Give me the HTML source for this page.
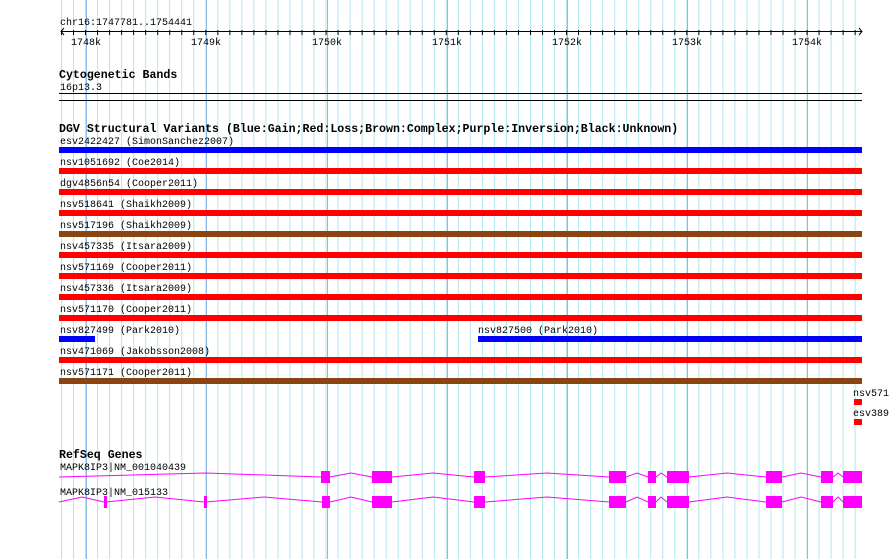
<!DOCTYPE html>
<html><head><meta charset="utf-8"><style>
html,body{margin:0;padding:0;background:#fff;width:890px;height:559px;overflow:hidden}
svg{display:block}
text{font-family:"Liberation Mono","DejaVu Sans Mono",monospace;font-size:10px;fill:#000}
.b{font-weight:bold;font-size:11.6px}
</style></head><body>
<svg width="890" height="559" viewBox="0 0 890 559" xmlns="http://www.w3.org/2000/svg">
<defs>
<pattern id="g" patternUnits="userSpaceOnUse" x="61" y="0" width="12.025" height="559">
<rect x="0" y="0" width="1" height="559" fill="#b4e6ee"/>
</pattern>
<pattern id="t" patternUnits="userSpaceOnUse" x="61" y="0" width="12.025" height="10">
<rect x="0" y="0" width="1" height="6" fill="#000"/>
</pattern>
</defs>
<rect x="61" y="0" width="796" height="559" fill="url(#g)"/>
<g fill="#8cbce6">
<rect x="86" y="0" width="1" height="559"/><rect x="206" y="0" width="1" height="559"/>
<rect x="327" y="0" width="1" height="559"/><rect x="447" y="0" width="1" height="559"/>
<rect x="567" y="0" width="1" height="559"/><rect x="687" y="0" width="1" height="559"/>
<rect x="807" y="0" width="1" height="559"/>
</g>
<!-- ruler -->
<text x="60" y="25">chr16:1747781..1754441</text>
<rect x="61" y="31" width="801" height="1" fill="#000"/>
<rect x="61" y="29" width="796" height="6" fill="url(#t)"/>
<path d="M64 28 L61 31.5 L64 35 M859 28 L862 31.5 L859 35" stroke="#000" fill="none"/>
<text x="71" y="45">1748k</text><text x="191" y="45">1749k</text><text x="312" y="45">1750k</text>
<text x="432" y="45">1751k</text><text x="552" y="45">1752k</text><text x="672" y="45">1753k</text><text x="792" y="45">1754k</text>
<!-- cyto -->
<text class="b" x="59" y="78">Cytogenetic Bands</text>
<text x="60" y="90">16p13.3</text>
<rect x="59" y="93" width="803" height="1" fill="#000"/>
<rect x="59" y="100" width="803" height="1" fill="#000"/>
<!-- DGV -->
<text class="b" x="59" y="132">DGV Structural Variants (Blue:Gain;Red:Loss;Brown:Complex;Purple:Inversion;Black:Unknown)</text>
<text x="60" y="144">esv2422427 (SimonSanchez2007)</text>
<rect x="59" y="147" width="803" height="6" fill="#0000ff"/>
<text x="60" y="165">nsv1051692 (Coe2014)</text>
<rect x="59" y="168" width="803" height="6" fill="#ff0000"/>
<text x="60" y="186">dgv4856n54 (Cooper2011)</text>
<rect x="59" y="189" width="803" height="6" fill="#ff0000"/>
<text x="60" y="207">nsv518641 (Shaikh2009)</text>
<rect x="59" y="210" width="803" height="6" fill="#ff0000"/>
<text x="60" y="228">nsv517196 (Shaikh2009)</text>
<rect x="59" y="231" width="803" height="6" fill="#8b4513"/>
<text x="60" y="249">nsv457335 (Itsara2009)</text>
<rect x="59" y="252" width="803" height="6" fill="#ff0000"/>
<text x="60" y="270">nsv571169 (Cooper2011)</text>
<rect x="59" y="273" width="803" height="6" fill="#ff0000"/>
<text x="60" y="291">nsv457336 (Itsara2009)</text>
<rect x="59" y="294" width="803" height="6" fill="#ff0000"/>
<text x="60" y="312">nsv571170 (Cooper2011)</text>
<rect x="59" y="315" width="803" height="6" fill="#ff0000"/>
<text x="60" y="333">nsv827499 (Park2010)</text>
<rect x="59" y="336" width="36" height="6" fill="#0000ff"/>
<text x="478" y="333">nsv827500 (Park2010)</text>
<rect x="478" y="336" width="384" height="6" fill="#0000ff"/>
<text x="60" y="354">nsv471069 (Jakobsson2008)</text>
<rect x="59" y="357" width="803" height="6" fill="#ff0000"/>
<text x="60" y="375">nsv571171 (Cooper2011)</text>
<rect x="59" y="378" width="803" height="6" fill="#8b4513"/>
<text x="853" y="396">nsv571</text>
<rect x="854" y="399" width="8" height="6" fill="#ff0000"/>
<text x="853" y="416">esv389</text>
<rect x="854" y="419" width="8" height="6" fill="#ff0000"/>
<!-- genes -->
<text class="b" x="59" y="458">RefSeq Genes</text>
<text x="60" y="470">MAPK8IP3|NM_001040439</text>
<g stroke="#ff00ff" fill="none">
<polyline points="59,477 206,473 321,477"/>
<polyline points="330,477 351,473 372,477"/>
<polyline points="392,477 433,473 474,477"/>
<polyline points="485,477 547,473 609,477"/>
<polyline points="626,477 637,473 648,477"/>
<polyline points="656,477 661,473 667,477"/>
<polyline points="689,477 727,473 766,477"/>
<polyline points="782,477 801,473 821,477"/>
<polyline points="833,477 838,473 843,477"/>
<polyline points="59,502 82,497 104,502"/>
<polyline points="106,502 155,497 204,502"/>
<polyline points="206,502 264,497 322,502"/>
<polyline points="330,502 351,497 372,502"/>
<polyline points="392,502 433,497 474,502"/>
<polyline points="485,502 547,497 609,502"/>
<polyline points="626,502 637,497 648,502"/>
<polyline points="656,502 661,497 667,502"/>
<polyline points="689,502 727,497 766,502"/>
<polyline points="782,502 801,497 821,502"/>
<polyline points="833,502 838,497 843,502"/>
</g>
<g fill="#ff00ff">
<rect x="321" y="471" width="9" height="12"/><rect x="372" y="471" width="20" height="12"/>
<rect x="474" y="471" width="11" height="12"/><rect x="609" y="471" width="17" height="12"/>
<rect x="648" y="471" width="8" height="12"/><rect x="667" y="471" width="22" height="12"/>
<rect x="766" y="471" width="16" height="12"/><rect x="821" y="471" width="12" height="12"/>
<rect x="843" y="471" width="19" height="12"/>
<rect x="104" y="496" width="3" height="12"/><rect x="204" y="496" width="3" height="12"/>
<rect x="322" y="496" width="8" height="12"/><rect x="372" y="496" width="20" height="12"/>
<rect x="474" y="496" width="11" height="12"/><rect x="609" y="496" width="17" height="12"/>
<rect x="648" y="496" width="8" height="12"/><rect x="667" y="496" width="22" height="12"/>
<rect x="766" y="496" width="16" height="12"/><rect x="821" y="496" width="12" height="12"/>
<rect x="843" y="496" width="19" height="12"/>
</g>
<text x="60" y="495">MAPK8IP3|NM_015133</text>
</svg>
</body></html>
